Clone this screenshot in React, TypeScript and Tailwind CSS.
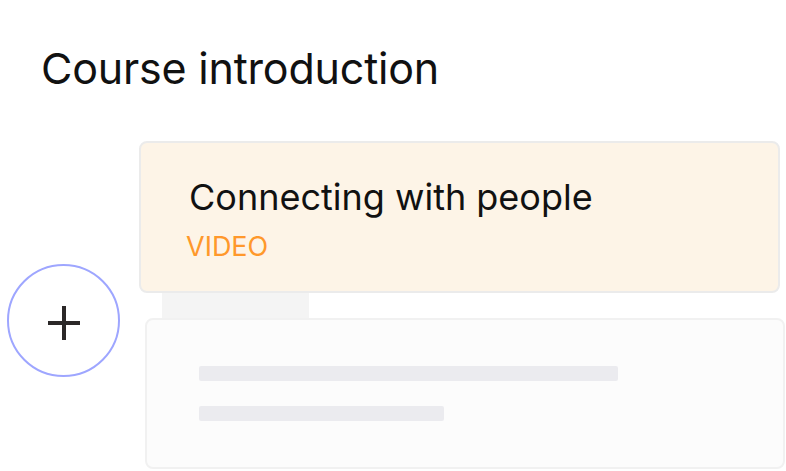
export default function App() {
    return (
        <div className="w-[786px] h-[471px] bg-white overflow-hidden font-['Inter',sans-serif] text-[#111]">

            <h1 className="pl-[41px] pt-[47px] text-[43px] leading-[43px] font-normal tracking-[-0.2px]">
                Course introduction
            </h1>

            <div className="flex items-start mt-[51px]">
                <div className="ml-[7px] mt-[123px] w-[113px] h-[113px] rounded-full border-2 border-[#9ea6ff] flex items-center justify-center shrink-0">
                    <svg width="34" height="36" viewBox="0 0 34 36" className="mt-[5px]">
                        <line x1="1" y1="18" x2="33" y2="18" stroke="#2b2828" strokeWidth="4" />
                        <line x1="17" y1="1" x2="17" y2="35" stroke="#2b2828" strokeWidth="4" />
                    </svg>
                </div>

                <div className="ml-[19px] flex flex-col">
                    <div className="w-[641px] h-[152px] rounded-[8px] border-2 border-[#ebebeb] bg-[#fdf4e7] pl-[48px] pt-[34px]">
                        <div className="text-[36px] leading-[40px] text-[#111]">Connecting with people</div>
                        <div className="mt-[16px] -ml-[3px] text-[27px] leading-[27px] text-[#ff982b]">VIDEO</div>
                    </div>
                    <div className="ml-[23px] w-[147px] h-[25px] bg-[#f4f4f4]" />
                    <div className="ml-[6px] w-[640px] h-[151px] rounded-[8px] border-2 border-[#f1f1f1] bg-[#fcfcfc] pl-[52px] pt-[46px]">
                        <div className="w-[419px] h-[15px] rounded-[2px] bg-[#ebebef]" />
                        <div className="mt-[25px] w-[245px] h-[15px] rounded-[2px] bg-[#ebebef]" />
                    </div>
                </div>
            </div>

        </div>
    )
}
